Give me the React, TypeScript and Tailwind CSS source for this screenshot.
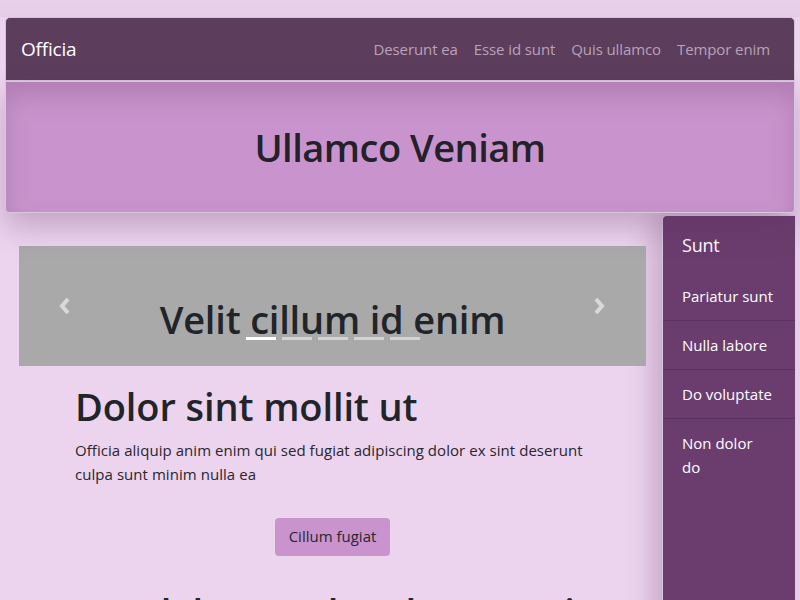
import React from 'react';

const navLinks = ['Deserunt ea', 'Esse id sunt', 'Quis ullamco', 'Tempor enim'];
const sideItems = ['Pariatur sunt', 'Nulla labore', 'Do voluptate', 'Non dolor\ndo'];

const Chevron: React.FC<{ dir: 'left' | 'right' }> = ({ dir }) => (
  <svg width="16" height="22" viewBox="0 0 16 22" className="block">
    <polyline
      points={dir === 'left' ? '11,4 5,11 11,18' : '5,4 11,11 5,18'}
      fill="none"
      stroke="#d9d9d9"
      strokeWidth="4"
    />
  </svg>
);

export default function App() {
  return (
    <div
      className="min-h-[600px] h-[600px] overflow-hidden bg-[#ecd4ee] text-[#212529]"
      style={{ fontFamily: '"Open Sans", "Noto Sans", sans-serif' }}
    >
      <div className="h-[17px] bg-gradient-to-b from-[#e9d0ea] to-[#e5cce7]" />

      {/* Navbar */}
      <nav className="mx-[5px] h-[64px] flex items-center justify-between bg-[#5c3d5c] rounded-t-[5px] border border-[#d4c4d6] pl-[15px] pr-[16px]">
        <span className="text-[19px] text-white tracking-[-0.2px]">Officia</span>
        <ul className="flex items-center">
          {navLinks.map((l) => (
            <li key={l} className="px-[8px] text-[15px] text-[#b9a2ba] tracking-[-0.1px]">
              {l}
            </li>
          ))}
        </ul>
      </nav>

      {/* Hero */}
      <header className="relative z-10 mx-[5px] h-[132px] flex items-center justify-center bg-[#c994cd] border border-[#d9c8db] rounded-b-[4px] shadow-[0_14px_30px_rgba(90,40,90,0.28),inset_0_14px_24px_rgba(110,60,110,0.26)]">
        <h1 className="text-[38px] font-semibold tracking-[-0.5px] text-[#23222a]">Ullamco Veniam</h1>
      </header>

      {/* Body */}
      <div className="mx-[5px] flex">
        <main className="flex-1 pl-[14px] pr-[16px] pt-[33px]">
          <div className="relative h-[120px] bg-[#a9a9a9] flex items-center justify-center">
            <div className="absolute left-[38px] top-[49px]">
              <Chevron dir="left" />
            </div>
            <div className="absolute right-[39px] top-[49px]">
              <Chevron dir="right" />
            </div>
            <h2 className="mt-[26px] text-[38px] font-semibold tracking-[-0.2px] text-[#212529]">
              Velit cillum id enim
            </h2>
            <div className="absolute left-0 right-0 top-[91px] flex justify-center gap-[6px]">
              {[0, 1, 2, 3, 4].map((i) => (
                <span key={i} className={`block w-[30px] h-[3px] ${i === 0 ? 'bg-white' : 'bg-[#d3d3d3]'}`} />
              ))}
            </div>
          </div>

          <section className="px-[56px] pt-[18px]">
            <h1 className="text-[38px] font-semibold leading-[1.2] tracking-[-0.1px] text-[#212529]">
              Dolor sint mollit ut
            </h1>
            <p className="mt-[8px] text-[15px] leading-[24px] tracking-[0.05px] text-[#29262c]">
              Officia aliquip anim enim qui sed fugiat adipiscing dolor ex sint deserunt culpa sunt minim nulla ea
            </p>
          </section>

          <div className="flex justify-center pt-[32px]">
            <button className="h-[38px] px-[14px] rounded-[4px] bg-[#c994cd] text-[15px] text-[#29262c]">
              Cillum fugiat
            </button>
          </div>

          <h2 className="mt-[28px] text-center text-[38px] font-semibold tracking-[-0.4px] text-[#212529] whitespace-nowrap">
            Aute labore culpa deserunt in
          </h2>
        </main>

        <aside className="w-[133px] mt-[2px] h-[420px] bg-[#6b3d6e] rounded-tl-[5px] border-l border-t border-[#d9c8db] text-white shadow-[-10px_0_24px_rgba(90,40,90,0.25)]">
          <div className="h-[56px] pl-[19px] pt-[2px] flex items-center text-[18px] tracking-[-0.2px]">Sunt</div>
          {sideItems.map((s, i) => (
            <div
              key={s}
              className={`pl-[19px] pr-[8px] py-[12px] text-[15px] leading-[24px] whitespace-pre-line ${
                i < sideItems.length - 1 ? 'border-b border-[#5c3360]' : ''
              }`}
            >
              {s}
            </div>
          ))}
        </aside>
      </div>
    </div>
  );
}
